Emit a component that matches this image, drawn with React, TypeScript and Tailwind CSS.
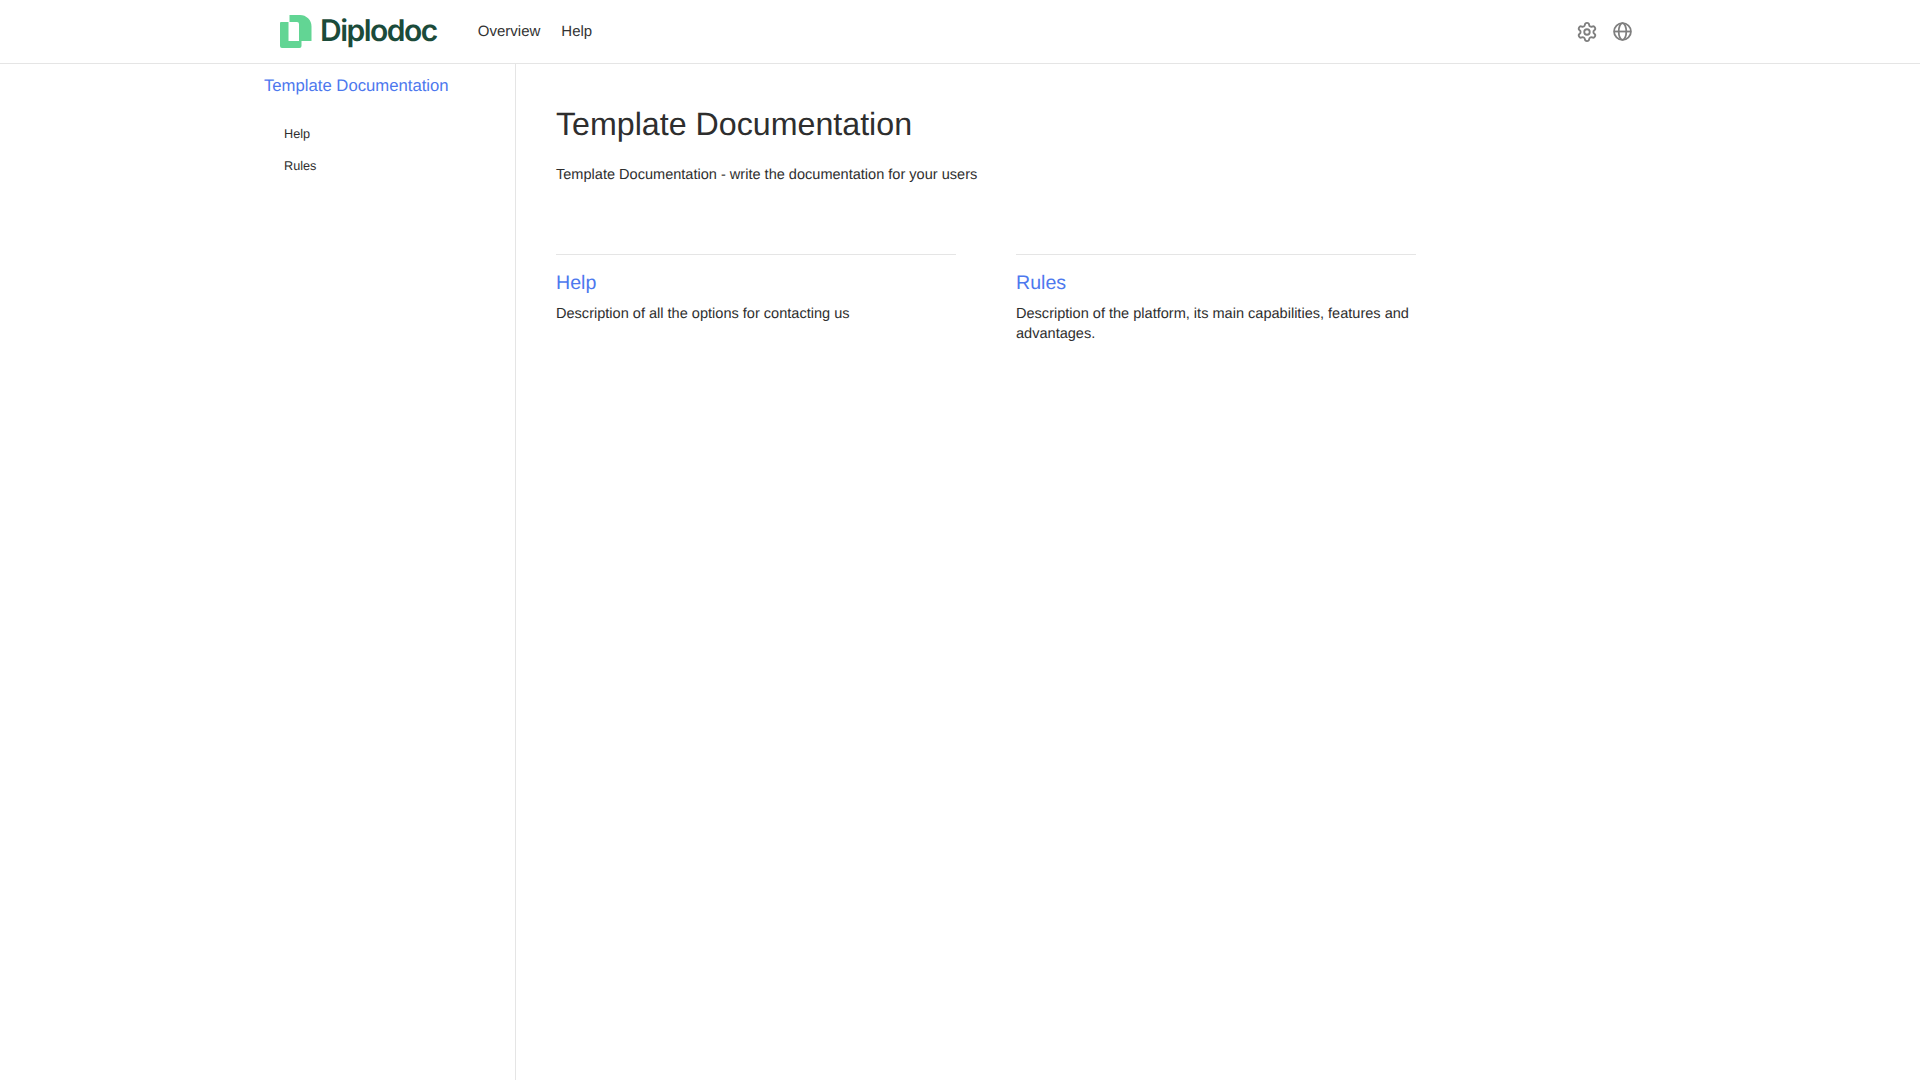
import { Settings } from "lucide-react";

function Logo() {
  return (
    <svg width="32" height="33" viewBox="0 0 32 33" className="shrink-0">
      <path d="M1 7h7.500v19H21.500v5a2 2 0 0 1-2 2H2a2 2 0 0 1-2-2V8a1 1 0 0 1 1-1z" fill="#62d594" />
      <path d="M9.500 0H20a11.500 11.500 0 0 1 11.500 11.500V26H19V9a2 2 0 0 0-2-2H9.500z" fill="#62d594" />
    </svg>
  );
}

function Globe() {
  return (
    <svg width="19" height="19" viewBox="0 0 18 18" fill="none" stroke="#7f7f7f" strokeWidth="1.7">
      <circle cx="9" cy="9" r="8" />
      <path d="M1 9h16" />
      <ellipse cx="9" cy="9" rx="3.6" ry="8" />
    </svg>
  );
}

const cards = [
  { title: "Help", text: "Description of all the options for contacting us" },
  { title: "Rules", text: "Description of the platform, its main capabilities, features and advantages." },
];

export default function App() {
  return (
    <div className="flex h-[1080px] flex-col bg-white font-['Liberation_Sans',Arial,sans-serif] text-[#2e2e2e] antialiased [text-rendering:geometricPrecision]">
      <header className="flex h-[64px] shrink-0 items-center border-b border-[#e5e5e5] pl-[280px] pr-[288px]">
        <Logo />
        <span className="ml-[8px] font-['Inter',sans-serif] text-[30px] font-semibold tracking-[-1.5px] text-[#1b4b3a]">
          Diplodoc
        </span>
        <nav className="ml-[41px] mt-[2px] flex gap-[21px] text-[15px] text-[#333333]">
          <span>Overview</span>
          <span>Help</span>
        </nav>
        <div className="ml-auto flex items-center gap-[15px]">
          <Settings size={22} color="#7f7f7f" strokeWidth={2} />
          <Globe />
        </div>
      </header>
      <div className="flex flex-1">
        <aside className="w-[516px] shrink-0 border-r border-[#e5e5e5] pl-[264px]">
          <div className="mt-[10px] text-[16.7px] leading-[24px] text-[#4d78ee]">Template Documentation</div>
          <ul className="mt-[20px] pl-[20px] text-[12.7px]">
            <li className="h-[32px] leading-[32px]">Help</li>
            <li className="h-[32px] leading-[32px]">Rules</li>
          </ul>
        </aside>
        <main className="pl-[40px]">
          <h1 className="mt-[40px] text-[32.2px] leading-[40px]">Template Documentation</h1>
          <p className="mt-[21px] text-[14.55px] leading-[20px]">
            Template Documentation - write the documentation for your users
          </p>
          <div className="mt-[69px] flex gap-[60px]">
            {cards.map((c) => (
              <div key={c.title} className="w-[400px] border-t border-[#e5e5e5] pt-[15px]">
                <div className="text-[19.6px] leading-[26px] text-[#4d78ee]">{c.title}</div>
                <p className="mt-[8px] text-[14.55px] leading-[20px]">{c.text}</p>
              </div>
            ))}
          </div>
        </main>
      </div>
    </div>
  );
}
